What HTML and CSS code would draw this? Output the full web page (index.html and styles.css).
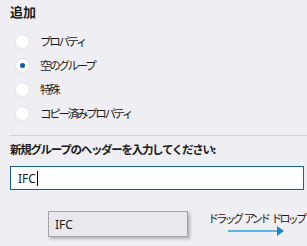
FILE: index.html
```html
<!DOCTYPE html>
<html lang="ja">

<head>
    <meta charset="UTF-8">
    <meta name="viewport" content="width=device-width, initial-scale=1.0">
    <title>グループの追加</title>
    <link rel="stylesheet" href="styles.css">
</head>

<body>
    <div class="panel">
        <div class="title">追加</div>
        <div class="options">
            <label class="opt"><span class="radio"></span>プロパティ</label>
            <label class="opt"><span class="radio on"></span>空のグループ</label>
            <label class="opt"><span class="radio"></span>特殊</label>
            <label class="opt"><span class="radio"></span>コピー済みプロパティ</label>
        </div>
        <div class="sep"></div>
        <div class="prompt">新規グループのヘッダーを入力してください:</div>
        <div class="field">IFC<span class="caret"></span></div>
        <div class="drag">
            <div class="chip">IFC</div>
            <div class="hint">
                <span class="hint-text">ドラッグ アンド ドロップ</span>
                <svg class="arrow" width="58" height="10" viewBox="0 0 58 10">
                    <line x1="0" y1="5" x2="50" y2="5" stroke="#5ab5e3" stroke-width="2" />
                    <polygon points="49,0 56,5 49,10" fill="#1e86c8" />
                </svg>
            </div>
        </div>
    </div>
</body>

</html>
```

FILE: styles.css
```css
* {
    padding: 0;
    margin: 0;
    box-sizing: border-box;
}

body {
    background: #efeef3;
    font-family: "Noto Sans CJK JP", "Noto Sans", sans-serif;
    color: #1b1b1b;
    width: 307px;
    height: 246px;
    overflow: hidden;
}

.panel {
    padding: 3px 0 0 10px;
}

.title {
    font-size: 13px;
    font-weight: bold;
    line-height: 18px;
}

.options {
    margin-top: 8px;
}

.opt {
    display: flex;
    align-items: center;
    height: 24px;
    font-size: 11.5px;
    letter-spacing: -2.3px;
}

.radio {
    width: 15px;
    height: 15px;
    border-radius: 50%;
    background: #fff;
    border: 1px solid #dedde3;
    margin: 0 10px 0 5px;
    display: flex;
    align-items: center;
    justify-content: center;
}

.radio.on::after {
    content: "";
    width: 5px;
    height: 5px;
    border-radius: 50%;
    background: #0a5fa8;
}

.sep {
    margin-top: 10px;
    height: 1px;
    background: #d5d4d9;
}

.prompt {
    margin-top: 4px;
    font-size: 11.5px;
    font-weight: bold;
    line-height: 18px;
    letter-spacing: -1.3px;
}

.field {
    margin-top: 8px;
    height: 24px;
    width: 294px;
    background: #fff;
    border: 1px solid #1b5e9e;
    display: flex;
    align-items: center;
    padding-left: 7px;
    font-family: "Noto Sans", sans-serif;
    font-size: 12px;
}

.caret {
    width: 1px;
    height: 15px;
    background: #000;
    margin-left: 1px;
}

.drag {
    display: flex;
    margin-top: 21px;
    padding-left: 38px;
}

.chip {
    flex-shrink: 0;
    width: 140px;
    height: 26px;
    background: #e9e8ed;
    border: 1px solid #a3a3a7;
    box-shadow: 2px 2px 3px rgba(0, 0, 0, 0.25);
    display: flex;
    align-items: center;
    padding-left: 6px;
    font-family: "Noto Sans", sans-serif;
    font-size: 12px;
}

.hint {
    flex-shrink: 0;
    margin-left: 20px;
    display: flex;
    flex-direction: column;
    align-items: flex-start;
}

.hint-text {
    font-size: 11px;
    line-height: 14px;
    letter-spacing: -2.7px;
    word-spacing: 3px;
    white-space: nowrap;
}

.arrow {
    margin: 1px 0 0 20px;
}
```
